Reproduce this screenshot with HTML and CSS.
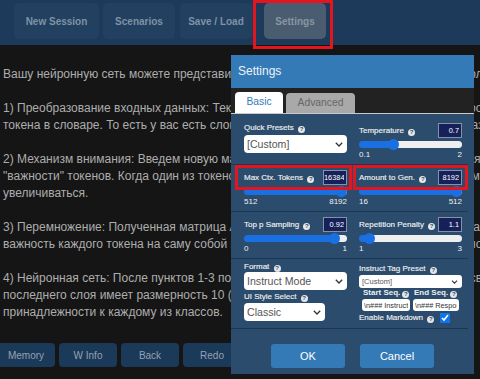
FILE: index.html
```html
<!DOCTYPE html>
<html lang="ru">
<head>
<meta charset="utf-8">
<title>Settings</title>
<link rel="stylesheet" href="styles.css">
</head>
<body>
<div class="app">
  <nav class="topbar">
    <button class="tbtn w-new">New Session</button>
    <button class="tbtn w-scn">Scenarios</button>
    <button class="tbtn w-save">Save / Load</button>
    <button class="tbtn w-set active">Settings</button>
  </nav>
  <main class="story">
    <p>Вашу нейронную сеть можете представить следующим образом, разбив её на несколько этапов обработки данных:</p>
    <p>1) Преобразование входных данных: Текст преобразуется в матрицу, где каждая строка соответствует вектору<br>токена в словаре. То есть у вас есть словарь размером N и матрица эмбеддингов размером N на D.</p>
    <p>2) Механизм внимания: Введем новую матрицу A, которая будет отражать взаимосвязи и степень<br>"важности" токенов. Когда один из токенов встречается в контексте чаще, его значимость будет<br>увеличиваться.</p>
    <p>3) Перемножение: Полученная матрица A умножается на матрицу эмбеддингов, отражая влияние и<br>важность каждого токена на саму собой и на все остальные токены последовательности.</p>
    <p>4) Нейронная сеть: После пунктов 1-3 полученные данные подаются на вход полносвязной сети. Выход<br>последнего слоя имеет размерность 10 (по числу классов) и отражает вероятности<br>принадлежности к каждому из классов.</p>
  </main>
  <footer class="bottombar">
    <button class="bbtn">Memory</button>
    <button class="bbtn">W Info</button>
    <button class="bbtn">Back</button>
    <button class="bbtn">Redo</button>
    <button class="bbtn">Retry</button>
    <button class="bbtn">Edit</button>
    <button class="bbtn">Send</button>
  </footer>
</div>

<div class="mark mark-top"></div>

<section class="modal">
  <header class="modal-head">Settings</header>
  <div class="tabs">
    <span class="tab on">Basic</span>
    <span class="tab">Advanced</span>
  </div>
  <div class="modal-body">
    <div class="row r-first">
      <div class="cell">
        <div class="lbl">Quick Presets <i class="q">?</i></div>
        <div class="select big"><span>[Custom]</span><svg class="chev" viewBox="0 0 8 5" width="8" height="5"><path d="M0.8 0.8 L4 4 L7.2 0.8"/></svg></div>
      </div>
      <div class="cell">
        <div class="head"><span class="lbl">Temperature <i class="q">?</i></span><input class="num" type="text" value="0.7"></div>
        <input class="rng" type="range" min="0.1" max="2" step="0.01" value="0.7" style="--p:0.316">
        <div class="minmax"><span>0.1</span><span>2</span></div>
      </div>
    </div>
    <hr class="sep">
    <div class="row">
      <div class="cell">
        <div class="head"><span class="lbl">Max Ctx. Tokens <i class="q">?</i></span><input class="num" type="text" value="16384"></div>
        <input class="rng" type="range" min="512" max="8192" step="1" value="8192" style="--p:1">
        <div class="minmax"><span>512</span><span>8192</span></div>
      </div>
      <div class="cell">
        <div class="head"><span class="lbl">Amount to Gen. <i class="q">?</i></span><input class="num" type="text" value="8192"></div>
        <input class="rng" type="range" min="16" max="512" step="1" value="512" style="--p:1">
        <div class="minmax"><span>16</span><span>512</span></div>
      </div>
    </div>
    <hr class="sep">
    <div class="row">
      <div class="cell">
        <div class="head"><span class="lbl">Top p Sampling <i class="q">?</i></span><input class="num" type="text" value="0.92"></div>
        <input class="rng" type="range" min="0" max="1" step="0.01" value="0.92" style="--p:0.92">
        <div class="minmax"><span>0</span><span>1</span></div>
      </div>
      <div class="cell">
        <div class="head"><span class="lbl">Repetition Penalty <i class="q">?</i></span><input class="num" type="text" value="1.1"></div>
        <input class="rng" type="range" min="1" max="3" step="0.01" value="1.1" style="--p:0.05">
        <div class="minmax"><span>1</span><span>3</span></div>
      </div>
    </div>
    <hr class="sep">
    <div class="row r-last">
      <div class="cell">
        <div class="lbl">Format <i class="q">?</i></div>
        <div class="select big"><span>Instruct Mode</span><svg class="chev" viewBox="0 0 8 5" width="8" height="5"><path d="M0.8 0.8 L4 4 L7.2 0.8"/></svg></div>
        <div class="lbl gap2">UI Style Select <i class="q">?</i></div>
        <div class="select big short"><span>Classic</span><svg class="chev" viewBox="0 0 8 5" width="8" height="5"><path d="M0.8 0.8 L4 4 L7.2 0.8"/></svg></div>
      </div>
      <div class="cell">
        <div class="lbl gap2">Instruct Tag Preset <i class="q">?</i></div>
        <div class="select small"><span>[Custom]</span><svg class="chev" viewBox="0 0 8 5" width="7" height="4"><path d="M0.8 0.8 L4 4 L7.2 0.8"/></svg></div>
        <div class="seq">
          <div class="lbl b">Start Seq.<i class="q">?</i></div>
          <div class="lbl b">End Seq.<i class="q">?</i></div>
          <input class="txt" type="text" value="\n### Instruction:">
          <input class="txt" type="text" value="\n### Response:">
        </div>
        <label class="md"><span class="lbl">Enable Markdown <i class="q">?</i></span><input class="chk" type="checkbox" checked></label>
      </div>
    </div>
    <hr class="sep">
  </div>
  <div class="modal-foot">
    <button class="mbtn">OK</button>
    <button class="mbtn">Cancel</button>
  </div>
</section>

<div class="mark mark-ctx"></div>
<div class="mark mark-gen"></div>
</body>
</html>
```
FILE: styles.css
```css
* { box-sizing: border-box; }
html, body { margin: 0; padding: 0; }
body {
  width: 480px;
  height: 379px;
  overflow: hidden;
  position: relative;
  background: #151515;
  font-family: "Liberation Sans", Arial, sans-serif;
}
.app {
  height: 379px;
  display: flex;
  flex-direction: column;
}

/* top bar */
.topbar {
  flex: none;
  height: 45px;
  background: #1d3a5a;
  display: flex;
  align-items: flex-start;
  gap: 4px;
  padding: 3px 0 0 14px;
}
.tbtn {
  height: 36px;
  padding: 0;
  border: 0;
  border-radius: 5px;
  background: #22405f;
  color: #7f92a6;
  font: bold 10px "Liberation Sans", Arial, sans-serif;
}
.w-new { width: 85px; }
.w-scn { width: 72px; margin-right: 1px; }
.w-save { width: 72px; }
.w-set { width: 62px; margin-left: 8px; }
.tbtn.active { background: #4a5c6f; color: #8896a4; }

/* story text */
.story {
  flex: 1;
  overflow: hidden;
  padding: 21px 0 0 3px;
  color: #adadad;
  font-size: 12px;
  line-height: 17px;
  white-space: nowrap;
}
.story p { margin: 0 0 17px; }

/* bottom bar */
.bottombar {
  flex: none;
  height: 36px;
  display: flex;
  gap: 4px;
  margin-left: -3px;
  padding-bottom: 12px;
}
.bbtn {
  flex: none;
  width: 58px;
  height: 24px;
  padding: 0;
  border: 0;
  border-radius: 4px;
  background: #1b3958;
  color: #93a2b2;
  font: 10px "Liberation Sans", Arial, sans-serif;
}

/* annotation marks */
.mark {
  position: absolute;
  border: 3px solid #e3151f;
  pointer-events: none;
}
.mark-top { left: 253px; top: 0; width: 80px; height: 49px; }
.mark-ctx { left: 235px; top: 165px; width: 117px; height: 25px; }
.mark-gen { left: 353px; top: 165px; width: 115px; height: 25px; }

/* modal */
.modal {
  position: absolute;
  left: 231px;
  top: 55px;
  width: 243px;
  height: 319px;
  background: #2b4c6d;
  display: flex;
  flex-direction: column;
  color: #f2f2f2;
}
.modal-head {
  flex: none;
  height: 33px;
  line-height: 33px;
  padding-left: 7px;
  background: #337ab7;
  color: #eef3f8;
  font-size: 12px;
}
.tabs {
  flex: none;
  height: 26px;
  background: #222;
  border-bottom: 1px solid #c9c9c9;
  display: flex;
  align-items: flex-end;
  gap: 3px;
  padding-left: 4px;
}
.tab {
  width: 69px;
  height: 20px;
  line-height: 20px;
  text-align: center;
  border-radius: 4px 4px 0 0;
  background: #a9a9a9;
  color: #666;
  font-size: 10.3px;
}
.tab.on {
  width: 48px;
  height: 21px;
  background: #fff;
  color: #337ab7;
}
.modal-body { flex: none; }
.row {
  display: grid;
  grid-template-columns: 103px 103px;
  column-gap: 12px;
  padding: 5px 12px 4px 13px;
}
.row.r-first { padding-top: 9px; }
.row.r-last { padding-top: 3px; padding-bottom: 4px; }
.sep {
  margin: 0 6px 0 0;
  border: 0;
  height: 1px;
  background: #1c3753;
}
.cell { display: flex; flex-direction: column; min-width: 0; }
.lbl {
  font-size: 8px;
  line-height: 10px;
  color: #f0f0f0;
  white-space: nowrap;
  -webkit-text-stroke: 0.15px #f0f0f0;
}
.lbl.b { font-weight: bold; -webkit-text-stroke: 0; }
.lbl.gap2 { margin-top: 2px; }
.q {
  display: inline-block;
  width: 7px;
  height: 7px;
  border-radius: 50%;
  background: #e6e6e6;
  color: #2b4c6d;
  font: bold 6px/7px "Liberation Sans", Arial, sans-serif;
  -webkit-text-stroke: 0;
  text-align: center;
  vertical-align: -1px;
  margin-left: 2px;
}
.head {
  height: 15px;
  display: flex;
  justify-content: space-between;
  align-items: center;
}
.num {
  width: 24px;
  height: 15px;
  margin: 0;
  padding: 0 2px 0 0;
  border: 1px solid #8690a6;
  background: #16215a;
  color: #fff;
  text-align: right;
  font: 7.4px "Liberation Sans", Arial, sans-serif;
}
.rng {
  -webkit-appearance: none;
  appearance: none;
  display: block;
  width: 100%;
  height: 12px;
  margin: 0;
  padding: 0;
  background: transparent;
}
.rng::-webkit-slider-runnable-track {
  height: 7px;
  border-radius: 4px;
  background: linear-gradient(to right, #1a6fe3 0 calc(5.5px + var(--p) * (100% - 11px)), #efefef 0);
}
.rng::-webkit-slider-thumb {
  -webkit-appearance: none;
  appearance: none;
  width: 11px;
  height: 11px;
  margin-top: -2px;
  border-radius: 50%;
  background: #1a6fe3;
  border: 0;
}
.minmax {
  height: 10px;
  line-height: 10px;
  display: flex;
  justify-content: space-between;
  font-size: 8px;
  color: #f0f0f0;
}
.select {
  display: flex;
  align-items: center;
  justify-content: space-between;
  background: #fff;
  border-radius: 4px;
  color: #555;
}
.select.big {
  height: 18px;
  margin-top: 2px;
  padding: 0 4px 0 3px;
  font-size: 10.6px;
}
.r-last .select.big { margin-top: 0; }
.r-last .select.big.short { width: 81px; margin-top: 1px; }
.select.small {
  height: 13px;
  margin-top: 1px;
  padding: 0 4px 0 3px;
  border-radius: 3px;
  font-size: 7.5px;
}
.chev { fill: none; stroke: #333; stroke-width: 1.3; }
.seq {
  display: grid;
  grid-template-columns: 48px 46px;
  column-gap: 3px;
  margin-left: 3px;
}
.seq .lbl { padding-left: 1px; }
.txt {
  width: 100%;
  height: 12px;
  margin: 1px 0 0;
  padding: 0 2px;
  border: 0;
  border-radius: 3px;
  background: #fff;
  color: #333;
  font: 7.3px "Liberation Sans", Arial, sans-serif;
}
.md {
  display: flex;
  align-items: center;
  height: 12px;
  margin-top: 1px;
}
.chk {
  width: 10px;
  height: 10px;
  margin: 0 0 0 6px;
  accent-color: #0a75f0;
}
.modal-foot {
  flex: none;
  display: flex;
  justify-content: center;
  gap: 15px;
  padding-top: 15px;
}
.mbtn {
  width: 74px;
  height: 24px;
  padding: 0;
  border: 0;
  border-radius: 3px;
  background: #337ab7;
  color: #fff;
  font: 11px "Liberation Sans", Arial, sans-serif;
}
```
